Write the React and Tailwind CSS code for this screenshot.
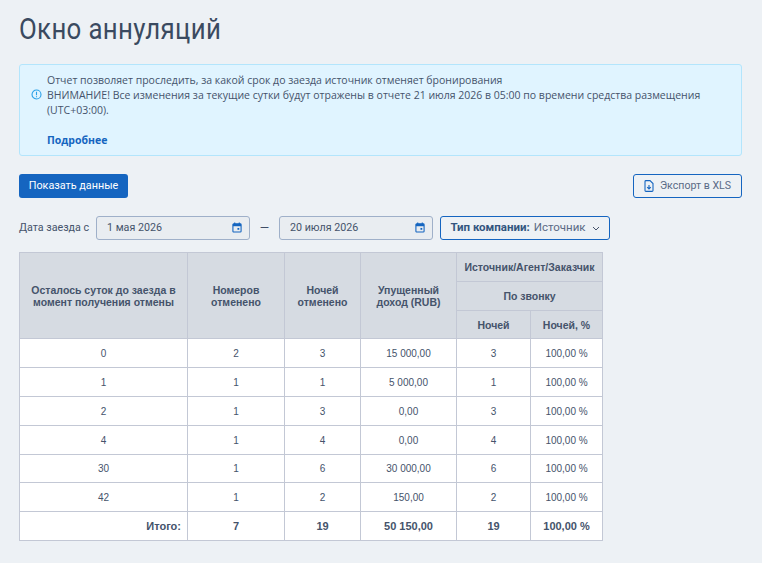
const rows = [
  ["0", "2", "3", "15 000,00", "3", "100,00 %"],
  ["1", "1", "1", "5 000,00", "1", "100,00 %"],
  ["2", "1", "3", "0,00", "3", "100,00 %"],
  ["4", "1", "4", "0,00", "4", "100,00 %"],
  ["30", "1", "6", "30 000,00", "6", "100,00 %"],
  ["42", "1", "2", "150,00", "2", "100,00 %"],
];

const th = "border border-[#c3c8d5] bg-[#d6dbe2] text-center align-middle font-bold p-0 text-[10.5px] leading-[12px]";
const td = "border border-[#c3c8d5] bg-white text-center align-middle p-0 text-[10px] leading-[12px] pt-[1px]";
const tdBold = "border border-[#c3c8d5] bg-white text-center align-middle p-0 text-[11px] leading-[12px]";

function Calendar() {
  return (
    <svg width="10" height="11" viewBox="0 0 11 12" fill="none" className="-mt-[2px] text-[#1565c0]">
      <path d="M3 0.5V2.5M8 0.5V2.5" stroke="currentColor" strokeWidth="1.2" />
      <rect x="1" y="2" width="9" height="9" rx="1" stroke="currentColor" strokeWidth="1.2" />
      <rect x="1" y="2" width="9" height="2.6" fill="currentColor" />
      <rect x="6" y="6.5" width="2" height="2" fill="currentColor" />
    </svg>
  );
}

function DateInput({ value, width }) {
  return (
    <div className={`${width} h-[24px] border border-[#9fb0c9] rounded-[3px] bg-[#e9edf1] flex items-center justify-between pl-[10px] pr-[7px] text-[10.7px] text-[#45536b]`}>
      <span>{value}</span>
      <Calendar />
    </div>
  );
}

export default function App() {
  return (
    <div className="w-[762px] h-[563px] overflow-hidden bg-[#edf1f5] px-[19px] text-[#3f4d66] font-['Roboto',sans-serif]">
      <h1 className="h-[64px] pt-[11px] text-[30px] leading-[36px] font-normal text-[#3a4a60] font-['Roboto',sans-serif] origin-left scale-x-[0.86] whitespace-nowrap tracking-[0.4px]">
        Окно аннуляций
      </h1>

      <div className="w-[723px] h-[92px] border border-[#b3e5fc] rounded-[3px] bg-[#e0f4ff] flex items-start pt-[8px] pl-[11px] pr-[30px] text-[10.5px] leading-[15px] text-[#45536b] font-['Open_Sans',sans-serif]">
        <svg width="11" height="11" viewBox="0 0 12 12" fill="none" className="shrink-0 mt-[16px] text-[#29a0e8]">
          <circle cx="6" cy="6" r="4.9" stroke="currentColor" strokeWidth="1.2" />
          <path d="M6 3V6.8M6 8V9" stroke="currentColor" strokeWidth="1.2" />
        </svg>
        <div className="ml-[5px]">
          <p>Отчет позволяет проследить, за какой срок до заезда источник отменяет бронирования</p>
          <p>ВНИМАНИЕ! Все изменения за текущие сутки будут отражены в отчете 21 июля 2026 в 05:00 по времени средства размещения (UTC+03:00).</p>
          <p className="mt-[15px] font-bold text-[#1565c0]">Подробнее</p>
        </div>
      </div>

      <div className="mt-[18px] w-[723px] flex items-center justify-between">
        <button className="h-[24px] w-[109px] rounded-[3px] bg-[#1565c0] text-white text-[10.8px]">Показать данные</button>
        <button className="h-[24px] w-[109px] rounded-[3px] border border-[#1565c0] text-[#5a6a85] text-[10.6px] flex items-center justify-center gap-[6px]">
          <svg width="10" height="12" viewBox="0 0 10 12" fill="none" className="text-[#1565c0]">
            <path d="M1 1.5C1 1 1.3 0.6 2 0.6H6L9 3.6V10.5C9 11 8.7 11.4 8 11.4H2C1.3 11.4 1 11 1 10.5Z" stroke="currentColor" strokeWidth="1.1" />
            <path d="M5 5V8.5M3.2 7.2L5 9L6.8 7.2" stroke="currentColor" strokeWidth="1.1" />
          </svg>
          Экспорт в XLS
        </button>
      </div>

      <div className="mt-[18px] flex items-center h-[24px]">
        <span className="w-[77px] text-[10.7px] text-[#45536b] whitespace-nowrap">Дата заезда с</span>
        <DateInput value="1 мая 2026" width="w-[154px]" />
        <span className="w-[29px] text-center text-[12px]">—</span>
        <DateInput value="20 июля 2026" width="w-[154px]" />
        <button className="ml-[7px] h-[24px] w-[170px] rounded-[3px] border border-[#1565c0] flex items-center justify-center text-[11.5px] whitespace-nowrap">
          <b className="font-bold text-[#33557f]">Тип компании:</b>
          <span className="ml-[4px] text-[#5a6a85]">Источник</span>
          <svg width="8" height="5" viewBox="0 0 8 5" fill="none" className="ml-[6px]">
            <path d="M1 1L4 4L7 1" stroke="#45536b" strokeWidth="1" />
          </svg>
        </button>
      </div>

      <table className="mt-[12px] table-fixed border-collapse w-[584px] font-['Liberation_Sans',sans-serif] text-[#45536b]">
        <colgroup>
          <col className="w-[168px]" />
          <col className="w-[97px]" />
          <col className="w-[76px]" />
          <col className="w-[96px]" />
          <col className="w-[74px]" />
          <col className="w-[72px]" />
        </colgroup>
        <thead>
          <tr className="h-[29px]">
            <th rowSpan={3} className={th}>Осталось суток до заезда в<br />момент получения отмены</th>
            <th rowSpan={3} className={th}>Номеров<br />отменено</th>
            <th rowSpan={3} className={th}>Ночей<br />отменено</th>
            <th rowSpan={3} className={th}>Упущенный<br />доход (RUB)</th>
            <th colSpan={2} className={th}>Источник/Агент/Заказчик</th>
          </tr>
          <tr className="h-[29px]">
            <th colSpan={2} className={th}>По звонку</th>
          </tr>
          <tr className="h-[28px]">
            <th className={th}>Ночей</th>
            <th className={th}>Ночей, %</th>
          </tr>
        </thead>
        <tbody>
          {rows.map((r, n) => (
            <tr key={r[0]} className={n === 4 ? "h-[28px]" : "h-[29px]"}>
              {r.map((c, i) => (
                <td key={i} className={td}>{c}</td>
              ))}
            </tr>
          ))}
          <tr className="h-[29px] font-bold">
            <td className={`${tdBold} !text-right pr-[6px]`}>Итого:</td>
            <td className={tdBold}>7</td>
            <td className={tdBold}>19</td>
            <td className={tdBold}>50 150,00</td>
            <td className={tdBold}>19</td>
            <td className={tdBold}>100,00 %</td>
          </tr>
        </tbody>
      </table>
    </div>
  );
}
